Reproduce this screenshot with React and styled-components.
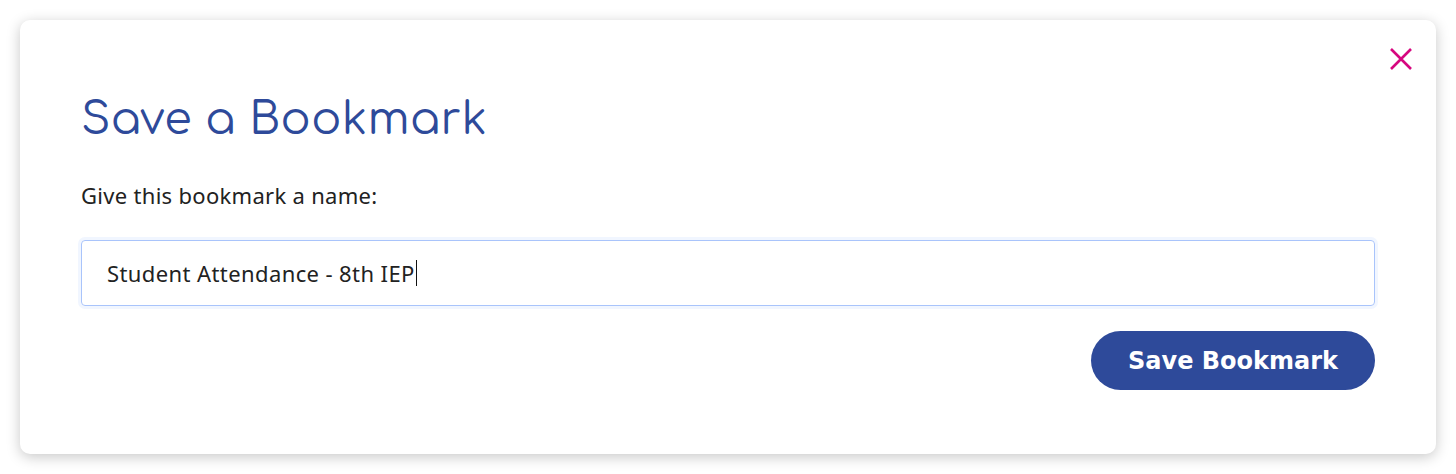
import React from "react";
import styled, { createGlobalStyle } from "styled-components";

const GlobalStyle = createGlobalStyle`
  html, body {
    margin: 0;
    padding: 0;
    background: #ffffff;
  }
`;

const Page = styled.div`
  padding: 20px;
`;

const Card = styled.div`
  position: relative;
  box-sizing: border-box;
  height: 434px;
  background: #ffffff;
  border-radius: 10px;
  box-shadow: 0 3px 14px rgba(0, 0, 0, 0.22);
  padding: 68px 61px 0 61px;
  display: flex;
  flex-direction: column;
`;

const CloseButton = styled.button`
  position: absolute;
  top: 22px;
  right: 18px;
  width: 34px;
  height: 34px;
  padding: 0;
  border: none;
  background: transparent;
  display: flex;
  align-items: center;
  justify-content: center;
  cursor: pointer;
`;

const Title = styled.h2`
  margin: 0;
  font-family: "Comfortaa", "Lato", "Noto Sans", sans-serif;
  font-weight: 400;
  font-size: 44.5px;
  line-height: 64px;
  color: #2e4a9a;
  letter-spacing: 0.4px;
`;

const Label = styled.label`
  margin-top: 28px;
  font-family: "Noto Sans", "Open Sans", sans-serif;
  font-size: 22px;
  line-height: 30px;
  letter-spacing: 0.3px;
  color: #222222;
`;

const Input = styled.div`
  margin-top: 30px;
  box-sizing: border-box;
  height: 66px;
  border: 1px solid #a9c4fb;
  border-radius: 4px;
  box-shadow: 0 0 0 3px #f1f6ff;
  padding: 0 25px;
  display: flex;
  align-items: center;
  font-family: "Noto Sans", "Open Sans", sans-serif;
  font-size: 22px;
  letter-spacing: 0.4px;
  color: #222222;
`;

const Caret = styled.span`
  display: inline-block;
  width: 1px;
  height: 26px;
  background: #111111;
  margin-left: 1px;
`;

const Actions = styled.div`
  margin-top: 25px;
  display: flex;
  justify-content: flex-end;
`;

const PrimaryButton = styled.button`
  height: 59px;
  padding: 0 37px;
  border: none;
  border-radius: 30px;
  background: #2e4a9a;
  color: #ffffff;
  font-family: "DejaVu Sans", Tahoma, sans-serif;
  font-weight: 700;
  font-size: 24px;
  cursor: pointer;
`;

const CloseIcon = () => (
  <svg width="24" height="24" viewBox="0 0 24 24">
    <path
      d="M2 2 L22 22 M22 2 L2 22"
      stroke="#d6077f"
      strokeWidth="2.6"
      fill="none"
    />
  </svg>
);

export default function App() {
  return (
    <>
      <GlobalStyle />
      <Page>
        <Card>
          <CloseButton aria-label="Close">
            <CloseIcon />
          </CloseButton>
          <Title>Save a Bookmark</Title>
          <Label>Give this bookmark a name:</Label>
          <Input>
            Student Attendance - 8th IEP
            <Caret />
          </Input>
          <Actions>
            <PrimaryButton>Save Bookmark</PrimaryButton>
          </Actions>
        </Card>
      </Page>
    </>
  );
}
